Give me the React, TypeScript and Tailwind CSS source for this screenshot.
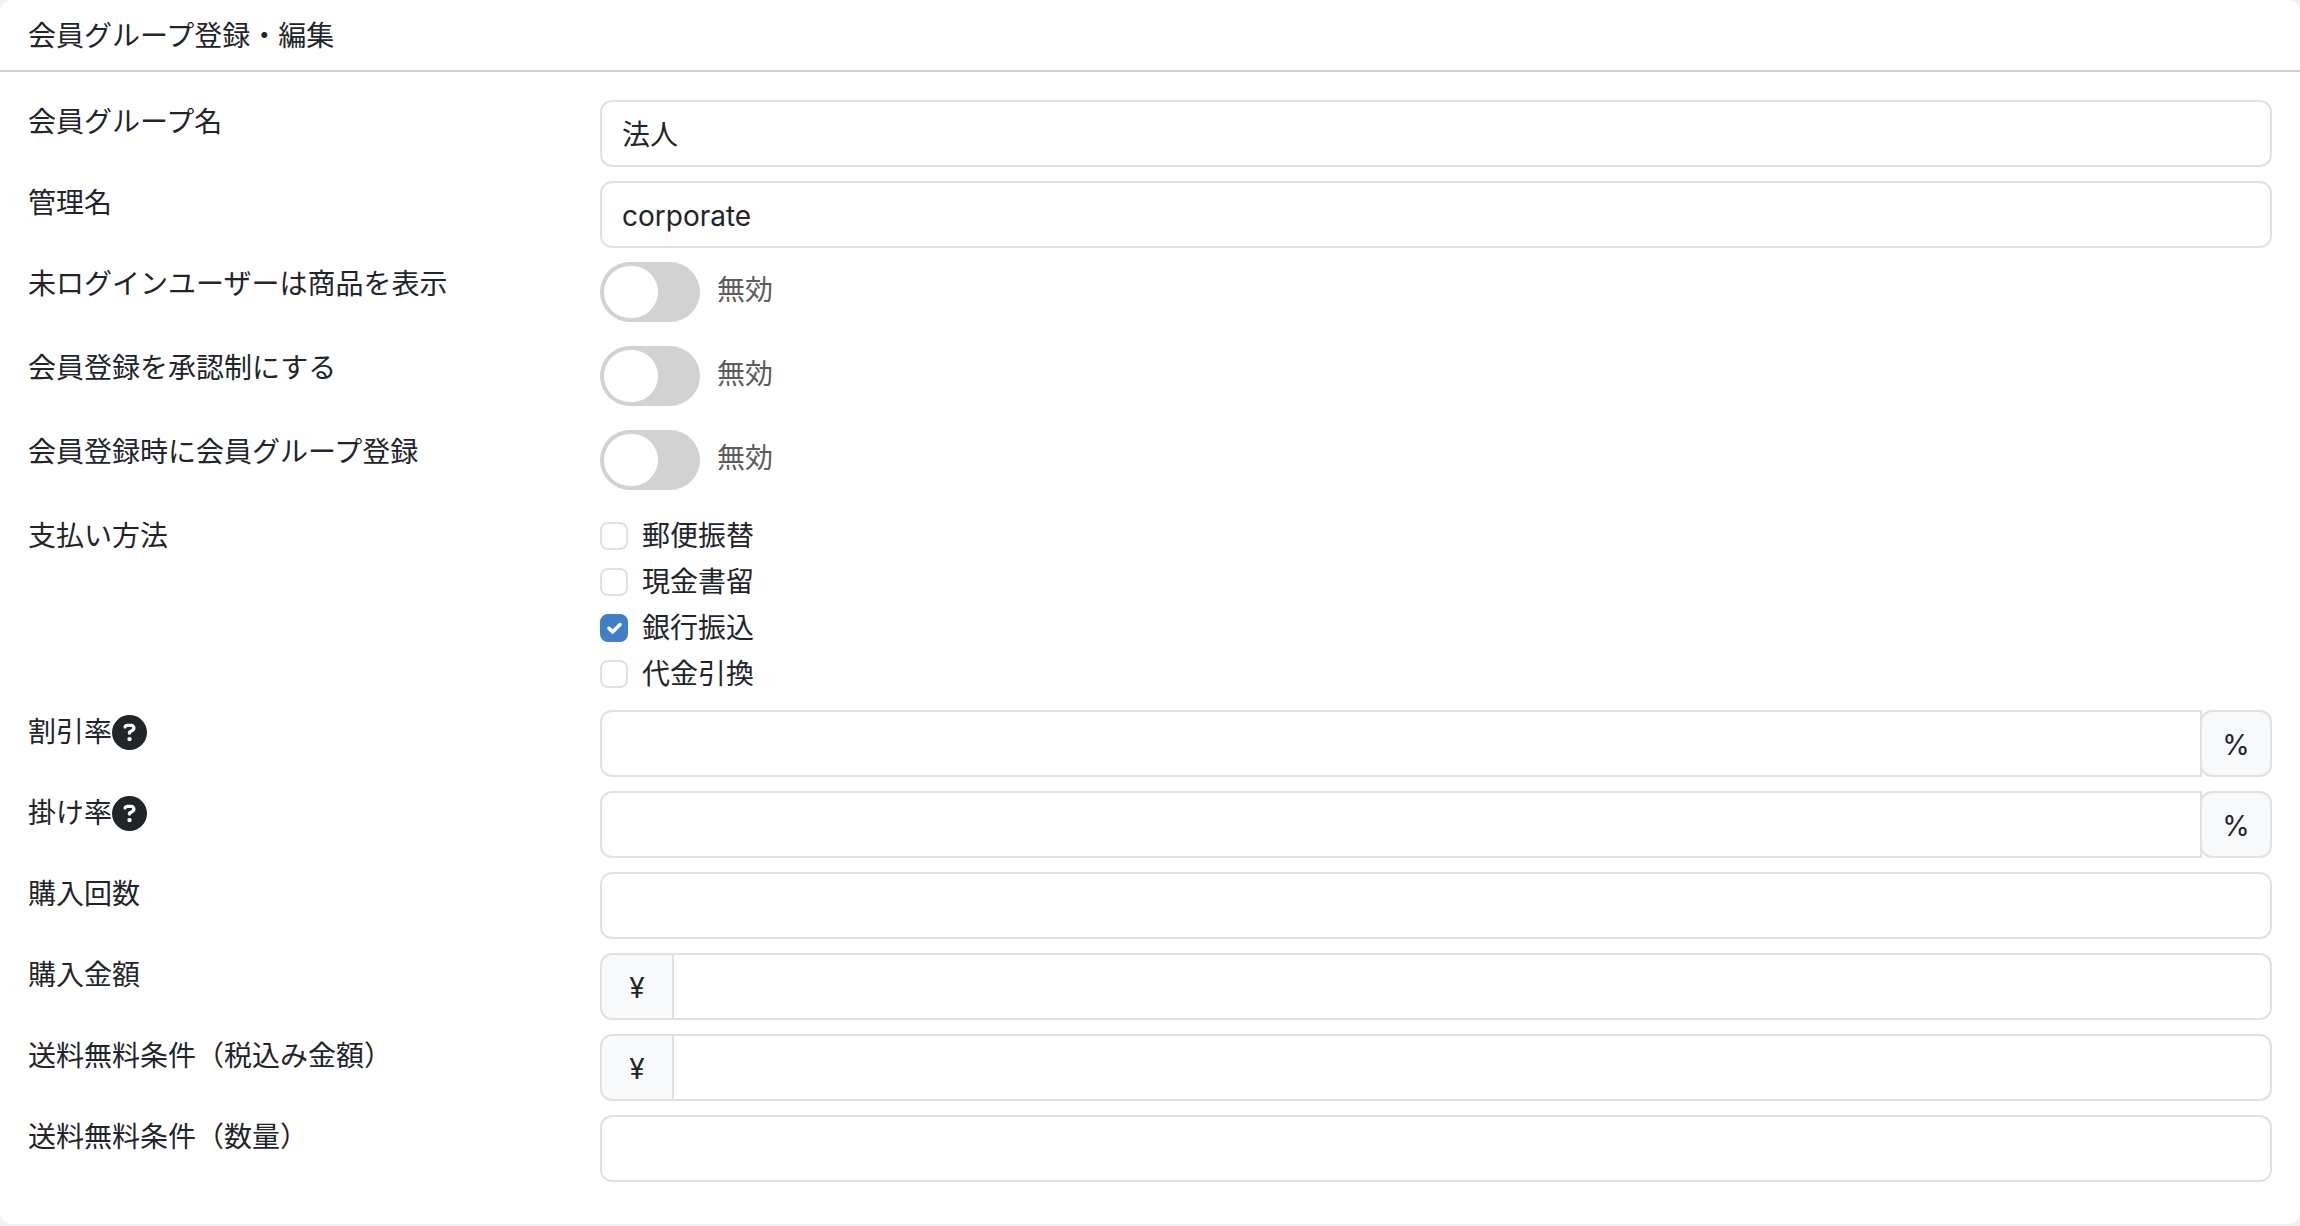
import React, { useState } from 'react';
import { FaCircleQuestion } from 'react-icons/fa6';

interface RowProps {
  label: string;
  htmlFor?: string;
  help?: boolean;
  children: React.ReactNode;
}

const Row: React.FC<RowProps> = ({ label, htmlFor, help, children }) => (
  <div className="grid grid-cols-4 gap-x-11">
    <div className="flex items-start">
      {htmlFor ? <label htmlFor={htmlFor}>{label}</label> : <span>{label}</span>}
      {help && (
        <button type="button" aria-label={`${label}のヘルプ`} className="mt-[5px] shrink-0">
          <FaCircleQuestion className="size-[35px]" />
        </button>
      )}
    </div>
    <div className="col-span-3">{children}</div>
  </div>
);

interface FieldProps {
  id: string;
  label: string;
  value?: string;
  prefix?: string;
  suffix?: string;
  help?: boolean;
}

const Field: React.FC<FieldProps> = ({ id, label, value, prefix, suffix, help }) => {
  let corners = 'rounded-xl';
  if (prefix) corners = 'rounded-r-xl -ml-0.5';
  if (suffix) corners = 'rounded-l-xl';

  return (
    <Row label={label} htmlFor={id} help={help}>
      <div className="flex h-[67px]">
        {prefix && (
          <span className="flex w-[74px] items-center justify-center rounded-l-xl border-2 border-[#dfe1e2] bg-[#f8f9fb] pt-0.5">
            {prefix}
          </span>
        )}
        <input
          id={id}
          type="text"
          defaultValue={value}
          className={`min-w-0 flex-1 border-2 border-[#dfe1e2] bg-white px-5 pt-0.5 focus:outline-none focus:border-[#3f7fc6] ${corners}`}
        />
        {suffix && (
          <span className="-ml-0.5 flex w-[72px] items-center justify-center rounded-xl border-2 border-[#dfe1e2] bg-[#f8f9fb] pt-0.5">
            {suffix}
          </span>
        )}
      </div>
    </Row>
  );
};

const ToggleField: React.FC<{ id: string; label: string }> = ({ id, label }) => {
  const [on, setOn] = useState(false);

  return (
    <Row label={label} htmlFor={id}>
      <div className="flex h-[70px] items-start gap-[17px]">
        <input
          id={id}
          type="checkbox"
          role="switch"
          checked={on}
          onChange={(e) => setOn(e.target.checked)}
          className="h-[60px] w-[100px] shrink-0 cursor-pointer appearance-none rounded-full bg-[#d2d2d2] p-1 before:block before:h-[52px] before:w-[54px] before:rounded-full before:bg-white before:transition-transform checked:bg-[#3f7fc6] checked:before:translate-x-[38px]"
        />
        <span className="mt-1.5 text-[#5c5c5c]">{on ? '有効' : '無効'}</span>
      </div>
    </Row>
  );
};

const payments = [
  { id: 'postal', label: '郵便振替', checked: false },
  { id: 'registered', label: '現金書留', checked: false },
  { id: 'bank', label: '銀行振込', checked: true },
  { id: 'cod', label: '代金引換', checked: false },
];

export default function App() {
  return (
    <div className="min-h-screen bg-[#eff0f1] font-['Inter','Noto_Sans_CJK_JP',sans-serif] text-[28px] leading-[44px] text-[#212529]">
      <form className="rounded-xl bg-white pb-[42px]">
        <h1 className="border-b-2 border-[#cfcfcf] px-7 pt-3.5 pb-3">会員グループ登録・編集</h1>

        <div className="flex flex-col gap-3.5 px-7 pt-7">
          <Field id="name" label="会員グループ名" value="法人" />
          <Field id="slug" label="管理名" value="corporate" />

          <ToggleField id="guest" label="未ログインユーザーは商品を表示" />
          <ToggleField id="approval" label="会員登録を承認制にする" />
          <ToggleField id="assign" label="会員登録時に会員グループ登録" />

          <Row label="支払い方法">
            <div className="flex flex-col gap-0.5">
              {payments.map((p) => (
                <label key={p.id} className="flex w-fit items-center gap-3.5">
                  <span className="grid">
                    <input
                      type="checkbox"
                      defaultChecked={p.checked}
                      className="peer col-start-1 row-start-1 size-7 appearance-none rounded-lg border-2 border-[#e0e1e2] bg-white checked:border-[#3f7fc6] checked:bg-[#3f7fc6]"
                    />
                    <svg
                      viewBox="0 0 28 28"
                      className="pointer-events-none invisible col-start-1 row-start-1 size-7 peer-checked:visible"
                      fill="none"
                      stroke="white"
                      strokeWidth="3.6"
                      strokeLinecap="round"
                      strokeLinejoin="round"
                    >
                      <path d="M9 14.3l3.6 3.7 7.4-7.4" />
                    </svg>
                  </span>
                  {p.label}
                </label>
              ))}
            </div>
          </Row>

          <Field id="discount" label="割引率" suffix="%" help />
          <Field id="rate" label="掛け率" suffix="%" help />
          <Field id="count" label="購入回数" />
          <Field id="amount" label="購入金額" prefix="¥" />
          <Field id="free-amount" label="送料無料条件（税込み金額）" prefix="¥" />
          <Field id="free-qty" label="送料無料条件（数量）" />
        </div>
      </form>
    </div>
  );
}
